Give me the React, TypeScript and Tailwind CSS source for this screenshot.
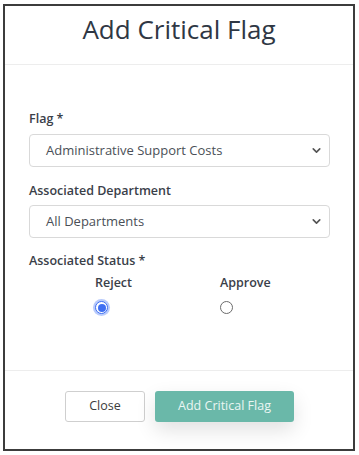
import { ChevronDown } from 'lucide-react'

const FONT = "font-['Open_Sans',_'Noto_Sans',_sans-serif]"

function SelectBox({ value }: { value: string }) {
  return (
    <div className="flex h-[33px] w-[301px] items-center justify-between rounded-[4px] border border-[#d9d9d9] bg-white pl-[16px] pr-[6px]">
      <span className="text-[13px] text-[#4a4f57]">{value}</span>
      <ChevronDown size={13} strokeWidth={3} className="text-[#555]" />
    </div>
  )
}

function Radio({ checked }: { checked?: boolean }) {
  if (checked) {
    return (
      <div className="flex h-[13px] w-[13px] items-center justify-center rounded-full border border-[#3f6ff2] bg-white shadow-[0_0_0_2px_#b9cbfb]">
        <div className="h-[8px] w-[8px] rounded-full bg-[#3f6ff2]" />
      </div>
    )
  }
  return <div className="h-[13px] w-[13px] rounded-full border border-[#6b6b6b] bg-white" />
}

const labelCls = 'text-[12.5px] font-semibold leading-[18px] text-[#3a4049]'

export default function App() {
  return (
    <div className={`${FONT} h-[455px] w-[359px] overflow-hidden bg-white pl-[3px] pt-[4px]`}>
      <div className="flex h-[447px] w-[352px] flex-col border-2 border-[#3c3c3c] bg-white">
        {/* Header */}
        <div className="flex h-[59px] items-start justify-center border-b border-[#ededed] pt-[10px]">
          <h1 className="text-[26px] font-normal leading-none text-[#2f3744]">Add Critical Flag</h1>
        </div>

        {/* Body */}
        <div className="flex flex-1 flex-col pl-[24px] pt-[45px]">
          <label className={`mb-[6px] ${labelCls}`}>Flag *</label>
          <SelectBox value="Administrative Support Costs" />

          <label className={`mb-[5px] mt-[15px] ${labelCls}`}>Associated Department</label>
          <SelectBox value="All Departments" />

          <label className={`mt-[14px] ${labelCls}`}>Associated Status *</label>
          <div className="mt-[4px] flex pl-[66px]">
            <div className="flex w-[125px] flex-col">
              <span className={labelCls}>Reject</span>
              <div className="mt-[9px]">
                <Radio checked />
              </div>
            </div>
            <div className="flex flex-col">
              <span className={labelCls}>Approve</span>
              <div className="mt-[9px]">
                <Radio />
              </div>
            </div>
          </div>
        </div>

        {/* Footer */}
        <div className="flex h-[79px] items-start justify-center gap-[10px] border-t border-[#ededed] pl-[1px] pt-[20px]">
          <button className="h-[31px] w-[80px] rounded-[3px] border border-[#cfcfcf] bg-white text-[12.5px] text-[#3c3c3c]">
            Close
          </button>
          <button className="h-[31px] w-[139px] rounded-[3px] bg-[#6ab8a9] text-[12.5px] text-[#eaf6f3] shadow-[0_8px_20px_rgba(0,0,0,0.12)]">
            Add Critical Flag
          </button>
        </div>
      </div>
    </div>
  )
}
